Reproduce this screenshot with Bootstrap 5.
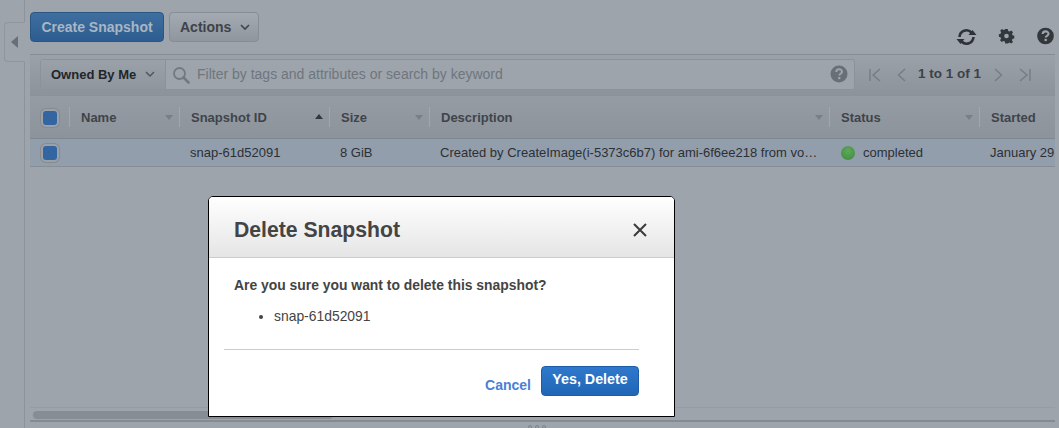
<!DOCTYPE html>
<html lang="en">
<head>
<meta charset="utf-8">
<title>Delete Snapshot</title>
<link href="https://cdn.jsdelivr.net/npm/bootstrap@5.3.0/dist/css/bootstrap.min.css" rel="stylesheet">
<style>
html,body{height:428px;overflow:hidden}
body{background:#9da4ac;font-family:"Liberation Sans",Arial,sans-serif;font-size:13px;color:#2c3034;position:relative}
.shell{height:428px;width:1059px}
.rail{width:25px;flex:none;border-right:1px solid #8c939a;position:relative}
.rail-tab{position:absolute;left:4px;top:22px;width:21px;height:40px;border:1px solid #8f969d;border-right-color:#9da4ac;border-radius:4px 0 0 4px;background:#9da4ac;display:flex;align-items:center;justify-content:center}
.rail-tab i{width:0;height:0;border:6px solid transparent;border-right:7px solid #686f76;border-left:0;display:block}
.workspace{width:1025px;margin-left:5px;flex:none;display:flex;flex-direction:column;height:428px}
.topbar{height:42px;padding-top:12px;gap:5px;flex:none}
.aws-btn{height:30px;padding:0 10px;border-radius:4px;font-size:14px;font-weight:700;line-height:28px;display:flex;align-items:center}
.aws-primary{width:134px;justify-content:center;background:linear-gradient(#3f6f9f,#2d5c90);border:1px solid #2b5683;color:#a9b6c3}
.aws-primary:hover{background:#2e5f95;color:#a9b6c3;border-color:#2b5683}
.aws-second{width:90px;background:linear-gradient(#a3aab1,#8f969e);border:1px solid #868d94;color:#3e4349;gap:9px}
.aws-second:hover{background:#8f969e;color:#3e4349;border-color:#868d94}
.caret-ic{flex:none}
.tool-ic{position:absolute}
.ic-refresh{left:956px;top:27px}
.ic-gear{left:998px;top:27px}
.ic-help{left:1037px;top:27px}
.filterbar{margin-top:12px;height:42px;border-top:1px solid #858c93;border-bottom:1px solid #8b9299;background:linear-gradient(#9aa1a9,#8c939b);padding:4px 0 0 10px;flex:none;display:flex}
.filterbox{width:815px;height:31px;border:1px solid #8b9299;border-radius:3px;background:#9da4ac;display:flex}
.owned{width:125px;flex:none;border-right:1px solid #8b9299;background:linear-gradient(#9aa1a9,#8f969e);display:flex;align-items:center;padding-left:10px;gap:9px;font-weight:700;color:#22262a;font-size:13px}
.searchhint{flex:1;color:#6f767d;font-size:14px;display:flex;align-items:center;gap:7px;padding-left:6px;position:relative}
.help-mini{position:absolute;right:6px;top:5px}
.pager{width:190px;display:flex;align-items:center;color:#3d4247;font-weight:700;font-size:13.5px;padding-left:14px;height:31px}
.pager span{margin:0 13px 0 12px;white-space:nowrap}
.gridwrap{width:1025px;overflow:hidden;flex:none}
.snaps{table-layout:fixed;width:1100px;margin:0;--bs-table-bg:transparent;--bs-table-color:#2c3034;border-collapse:separate;border-spacing:0}
.snaps th{height:43px;padding:2px 0 0 11px;background:linear-gradient(#959ca4,#8c939b);border-bottom:1px solid #80878e;color:#3f444a;font-size:13px;font-weight:700;vertical-align:middle;position:relative;white-space:nowrap}
.snaps th::after{content:"";position:absolute;right:0;top:11px;height:20px;width:1px;background:#a0a7ae}
.snaps td{height:28px;padding:0 0 0 10px;background:#939eac;border-bottom:1px solid #868d94;font-size:13px;vertical-align:middle;white-space:nowrap;overflow:hidden;color:#2c3034}
.snaps th.chk,.snaps td.chk{padding-left:13px}
.tick{width:14px;height:14px;border-radius:3px;background:#3366a0;box-shadow:0 0 0 2px #9aa1a9,0 0 0 3px #848b92;display:block}
.sort{position:absolute;right:7px;top:19px;width:0;height:0;border:4px solid transparent;border-top:5px solid #787f86;border-bottom:0}
.sort-up{border-top:0;border-bottom:5px solid #33383d;top:18px;right:7px}
.dot{width:14px;height:14px;border-radius:50%;background:radial-gradient(circle at 50% 35%,#5fa85a,#3f8a3d);display:inline-block;vertical-align:-3px;margin:0 8px 0 1px}
.spacer-area{flex:1}
.scrollzone{height:15px;border-top:1px solid #959ca3;border-bottom:2px solid #848b92;padding:3px 3px;flex:none;margin-bottom:6px}
.thumb{height:8px;width:300px;background:#868d94;border-radius:4px}
.dialog{position:absolute;left:208px;top:196px;width:467px;height:221px;border:1px solid #000;border-radius:5px 5px 0 0;background:#fff;overflow:hidden;color:#444}
.dialog-head{height:61px;border-bottom:1px solid #ccc;background:linear-gradient(#fff,#e5e5e5);padding:5px 27px 0 25px;display:flex;align-items:center;justify-content:space-between}
.dialog-head h5{font-size:21.2px;font-weight:700;margin:0;color:#444;line-height:1}
.x-btn{padding:0;border:0;background:none;display:block;line-height:0}
.dialog-body{padding:19px 25px 0;height:91px;font-size:13.9px;color:#444}
.dialog-body p{font-weight:700;margin:0 0 15px;line-height:16px}
.dialog-body ul{padding-left:40px;margin:0;line-height:16px}
.rule{margin:0 35px 0 15px;border-top:1px solid #ccc;height:0}
.dialog-foot{display:flex;justify-content:flex-end;align-items:center;padding:16px 35px 0 0;gap:10px}
.cancel-lnk{color:#4a7fd6;font-weight:700;font-size:14px;text-decoration:none;margin-top:8px}
.yes-btn{width:98px;height:30px;padding:0 0 2px;background:linear-gradient(#2f78cc,#2066b6);border:1px solid #1d5ca6;border-radius:4px;color:#fff;font-weight:700;font-size:14.3px}
.yes-btn:hover{background:#2066b6;color:#fff;border-color:#1d5ca6}
.grip{position:absolute;left:528px;top:425px;display:flex;gap:3px}
.grip i{width:4px;height:4px;border:1px solid #7d848b;border-radius:50%;display:block}
</style>
</head>
<body>
<div class="shell d-flex">
  <div class="rail"><div class="rail-tab"><i></i></div></div>
  <div class="workspace">
    <div class="topbar d-flex">
      <button type="button" class="btn aws-btn aws-primary">Create Snapshot</button>
      <button type="button" class="btn aws-btn aws-second">Actions
        <svg class="caret-ic" width="10" height="7" viewBox="0 0 10 7"><path d="M1 1l4 4 4-4" fill="none" stroke="#41464c" stroke-width="1.6"/></svg>
      </button>
    </div>
    <div class="filterbar">
      <div class="filterbox">
        <div class="owned">Owned By Me
          <svg class="caret-ic" width="10" height="7" viewBox="0 0 10 7"><path d="M1 1l4 4 4-4" fill="none" stroke="#50565c" stroke-width="1.5"/></svg>
        </div>
        <div class="searchhint">
          <svg width="18" height="18" viewBox="0 0 18 18"><circle cx="7.5" cy="7.5" r="5.5" fill="none" stroke="#727980" stroke-width="1.8"/><path d="M11.5 11.5l5 5" stroke="#727980" stroke-width="2.6" stroke-linecap="round"/></svg>
          Filter by tags and attributes or search by keyword
          <svg class="help-mini" width="18" height="18" viewBox="0 0 18 18"><circle cx="9" cy="9" r="8.5" fill="#696f76"/><path d="M6.2 7c0-3.600 5.800-3.600 5.800-.3 0 2-2.700 2-2.700 3.800" fill="none" stroke="#9da4ac" stroke-width="2"/><rect x="8.200" y="12" width="2.200" height="2.200" fill="#9da4ac"/></svg>
        </div>
      </div>
      <div class="pager">
        <svg width="12" height="14" viewBox="0 0 12 14"><path d="M1 1v12M11 1L4 7l7 6" fill="none" stroke="#757c83" stroke-width="1.4"/></svg>
        <svg class="ms-3" width="9" height="14" viewBox="0 0 9 14"><path d="M8 1L1.500 7 8 13" fill="none" stroke="#757c83" stroke-width="1.4"/></svg>
        <span>1 to 1 of 1</span>
        <svg width="9" height="14" viewBox="0 0 9 14"><path d="M1 1l6.500 6L1 13" fill="none" stroke="#757c83" stroke-width="1.4"/></svg>
        <svg class="ms-3" width="12" height="14" viewBox="0 0 12 14"><path d="M11 1v12M1 1l7 6-7 6" fill="none" stroke="#757c83" stroke-width="1.4"/></svg>
      </div>
    </div>
    <div class="gridwrap">
      <table class="table snaps">
        <colgroup><col style="width:40px"><col style="width:110px"><col style="width:150px"><col style="width:100px"><col style="width:400px"><col style="width:150px"><col style="width:150px"></colgroup>
        <thead><tr>
          <th class="chk"><i class="tick"></i></th>
          <th>Name<i class="sort"></i></th>
          <th>Snapshot ID<i class="sort sort-up"></i></th>
          <th>Size<i class="sort"></i></th>
          <th>Description<i class="sort"></i></th>
          <th>Status<i class="sort"></i></th>
          <th>Started</th>
        </tr></thead>
        <tbody><tr>
          <td class="chk"><i class="tick"></i></td>
          <td></td>
          <td>snap-61d52091</td>
          <td>8 GiB</td>
          <td>Created by CreateImage(i-5373c6b7) for ami-6f6ee218 from vo…</td>
          <td><i class="dot"></i>completed</td>
          <td>January 29</td>
        </tr></tbody>
      </table>
    </div>
    <div class="spacer-area"></div>
    <div class="scrollzone"><div class="thumb"></div></div>
  </div>
</div>
<svg class="tool-ic ic-refresh" width="21" height="20" viewBox="0 0 21 20"><path d="M3.500 10a7 7 0 0 1 12-4.500M17.500 10a7 7 0 0 1-12 4.500" fill="none" stroke="#2e3338" stroke-width="2.600"/><path d="M12.500 8h8L16.500 3zM8.500 12H.5l4 5z" fill="#2e3338"/></svg>
<svg class="tool-ic ic-gear" width="17" height="18" viewBox="0 0 17 18"><path d="M7 1h3l.5 2.300 1.600.7 2-1.200 2 2-1.200 2 .7 1.600 2 .6v3l-2 .5-.7 1.600 1.200 2-2 2-2-1.200-1.600.7L10 18H7l-.5-2.300-1.600-.7-2 1.200-2-2 1.200-2-.7-1.600L-.5 10V7l2-.5.7-1.600-1.200-2 2-2 2 1.200 1.600-.7z" transform="translate(1.300 1.200) scale(.85)" fill="#33383d"/><circle cx="8.500" cy="9" r="2.300" fill="#9da4ac"/></svg>
<svg class="tool-ic ic-help" width="17" height="18" viewBox="0 0 18 18"><circle cx="9" cy="9" r="8.800" fill="#33383d"/><path d="M6 7c0-3.800 6.200-3.800 6.200-.3 0 2.200-3 2-3 4" fill="none" stroke="#9da4ac" stroke-width="2.200"/><rect x="8" y="12" width="2.400" height="2.400" fill="#9da4ac"/></svg>

<div class="dialog" role="dialog">
  <div class="dialog-head">
    <h5>Delete Snapshot</h5>
    <button type="button" class="x-btn" aria-label="Close"><svg width="14" height="14" viewBox="0 0 14 14"><path d="M1 1l12 12M13 1L1 13" stroke="#3a3a3a" stroke-width="2"/></svg></button>
  </div>
  <div class="dialog-body">
    <p>Are you sure you want to delete this snapshot?</p>
    <ul><li>snap-61d52091</li></ul>
  </div>
  <div class="rule"></div>
  <div class="dialog-foot">
    <a href="#" class="cancel-lnk">Cancel</a>
    <button type="button" class="btn yes-btn">Yes, Delete</button>
  </div>
</div>
<div class="grip"><i></i><i></i><i></i></div>
<script src="https://cdn.jsdelivr.net/npm/bootstrap@5.3.0/dist/js/bootstrap.bundle.min.js"></script>
</body>
</html>
